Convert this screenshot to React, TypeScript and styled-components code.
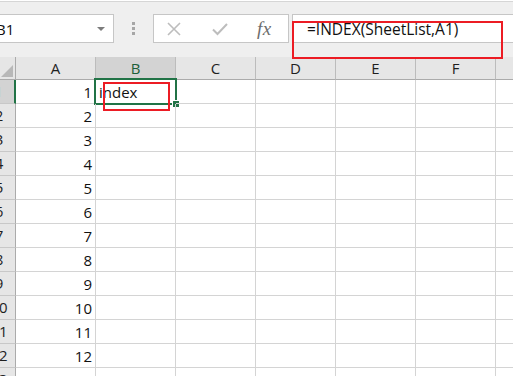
import styled, { createGlobalStyle } from 'styled-components';

const GlobalStyle = createGlobalStyle`
  html, body {
    margin: 0;
    padding: 0;
    background: #ffffff;
    overflow: hidden;
  }
  body {
    font-family: "Open Sans", "Noto Sans", sans-serif;
    font-size: 15px;
    color: #111111;
  }
`;

const COLUMNS = ['A', 'B', 'C', 'D', 'E', 'F', 'G'];
const ROWS = Array.from({ length: 13 }, (_, i) => i + 1);

/**
 * Excel-like sheet with formula bar and two red annotation boxes
 */
export default function App () {
  return (
    <>
      <GlobalStyle />
      <Window>
        <Toolbar>
          <NameBox>
            <span>B1</span>
            <DropArrow />
          </NameBox>
          <Grip>
            <i /><i /><i />
          </Grip>
          <ButtonBox>
            <IconSlot>
              <svg width="16" height="14" viewBox="0 0 16 14">
                <path d="M2 1 L14 13 M14 1 L2 13" stroke="#bdbdbd" strokeWidth="1.6" fill="none" />
              </svg>
            </IconSlot>
            <IconSlot>
              <svg width="16" height="14" viewBox="0 0 16 14">
                <path d="M1 7.5 L5.5 12 L15 2" stroke="#bdbdbd" strokeWidth="2" fill="none" />
              </svg>
            </IconSlot>
            <FxLabel>fx</FxLabel>
          </ButtonBox>
          <FormulaInput>=INDEX(SheetList,A1)</FormulaInput>
        </Toolbar>

        <Sheet>
          <Corner>
            <svg width="14" height="14" viewBox="0 0 14 14">
              <polygon points="13,1 13,13 1,13" fill="#b8b8b8" />
            </svg>
          </Corner>
          {COLUMNS.map((col) => (
            <ColHeader key={col} $selected={col === 'B'}>{col}</ColHeader>
          ))}

          {ROWS.map((row) => (
            <Row key={row} row={row} />
          ))}
        </Sheet>

        <Annotation $left={309} $top={20} $width={211} $height={38} />
        <Annotation $left={120} $top={81} $width={67} $height={29} />
      </Window>
    </>
  );
}

function Row ({ row }: { row: number }) {
  return (
    <>
      <RowHeader $selected={row === 1}>{row}</RowHeader>
      {COLUMNS.map((col) => {
        if (col === 'A') {
          return <Cell key={col} $align="right">{row <= 12 ? row : ''}</Cell>;
        }
        if (col === 'B' && row === 1) {
          return (
            <Cell key={col} $align="left">
              index
              <Selection><FillHandle /></Selection>
            </Cell>
          );
        }
        return <Cell key={col} $align="left" />;
      })}
    </>
  );
}

const Window = styled.div`
  position: relative;
  width: 560px;
  margin-left: -17px;
`;

const Toolbar = styled.div`
  display: flex;
  align-items: flex-start;
  box-sizing: border-box;
  height: 56px;
  margin-top: 1px;
  padding-top: 12px;
  border-top: 1px solid #d6d6d6;
  background: #efefef;
`;

const FieldBox = styled.div`
  box-sizing: border-box;
  height: 29px;
  background: #ffffff;
  border: 1px solid #c6c6c6;
`;

const NameBox = styled(FieldBox)`
  display: flex;
  align-items: center;
  justify-content: space-between;
  width: 126px;
  margin-left: 5px;
  padding: 0 8px 0 7px;
  line-height: 20px;
`;

const DropArrow = styled.span`
  width: 0;
  height: 0;
  border-left: 4px solid transparent;
  border-right: 4px solid transparent;
  border-top: 4px solid #7c7c7c;
`;

const Grip = styled.div`
  display: flex;
  flex-direction: column;
  gap: 2px;
  margin: 8px 0 0 18px;

  i {
    display: block;
    width: 3px;
    height: 3px;
    background: #a6a6a6;
  }
`;

const ButtonBox = styled(FieldBox)`
  display: flex;
  align-items: center;
  width: 136px;
  margin-left: 18px;
  padding-left: 12px;
  gap: 30px;
`;

const IconSlot = styled.span`
  display: flex;
  width: 16px;
  height: 14px;
`;

const FxLabel = styled.span`
  margin-left: -1px;
  font-family: "Liberation Serif", "DejaVu Serif", serif;
  font-style: italic;
  font-size: 19px;
  line-height: 20px;
  color: #6d6d6d;
  letter-spacing: 0.5px;
`;

const FormulaInput = styled(FieldBox)`
  flex: 1;
  margin-left: 3px;
  padding: 4px 0 0 14px;
  font-size: 15.5px;
  line-height: 20px;
  white-space: nowrap;
`;

const Sheet = styled.div`
  display: grid;
  grid-template-columns: 33px repeat(7, 80px);
  grid-auto-rows: 24px;
  grid-template-rows: 23px;
`;

const HeaderBase = styled.div`
  box-sizing: border-box;
  background: #e6e6e6;
  line-height: 22px;
  text-align: center;
  color: #1f1f1f;
`;

const Corner = styled(HeaderBase)`
  display: flex;
  align-items: flex-end;
  justify-content: flex-end;
  padding: 0 1px 1px 0;
  border-right: 1px solid #ababab;
  border-bottom: 1px solid #ababab;
`;

const ColHeader = styled(HeaderBase)<{ $selected?: boolean }>`
  border-right: 1px solid #bcbcbc;
  border-bottom: ${(p) => (p.$selected ? '2px solid #217346' : '1px solid #ababab')};
  background: ${(p) => (p.$selected ? '#d3d3d3' : '#e6e6e6')};
  color: ${(p) => (p.$selected ? '#1d5f3a' : '#1f1f1f')};
`;

const RowHeader = styled(HeaderBase)<{ $selected?: boolean }>`
  line-height: 23px;
  border-bottom: 1px solid #c8c8c8;
  border-right: ${(p) => (p.$selected ? '2px solid #217346' : '1px solid #ababab')};
  background: ${(p) => (p.$selected ? '#d3d3d3' : '#e6e6e6')};
  color: ${(p) => (p.$selected ? '#217346' : '#1f1f1f')};
`;

const Cell = styled.div<{ $align: 'left' | 'right' }>`
  position: relative;
  box-sizing: border-box;
  padding: 1px 3px 0;
  line-height: 23px;
  text-align: ${(p) => p.$align};
  border-right: 1px solid #d4d4d4;
  border-bottom: 1px solid #d4d4d4;
  white-space: nowrap;
`;

const Selection = styled.span`
  position: absolute;
  top: -2px;
  left: -2px;
  right: -2px;
  bottom: -2px;
  border: 2px solid #217346;
  pointer-events: none;
`;

const FillHandle = styled.span`
  position: absolute;
  right: -5px;
  bottom: -5px;
  width: 6px;
  height: 6px;
  background: #217346;
  border: 1px solid #ffffff;
`;

const Annotation = styled.div<{ $left: number; $top: number; $width: number; $height: number }>`
  position: absolute;
  box-sizing: border-box;
  left: ${(p) => p.$left}px;
  top: ${(p) => p.$top}px;
  width: ${(p) => p.$width}px;
  height: ${(p) => p.$height}px;
  border: 2px solid #ec1c24;
  pointer-events: none;
`;
